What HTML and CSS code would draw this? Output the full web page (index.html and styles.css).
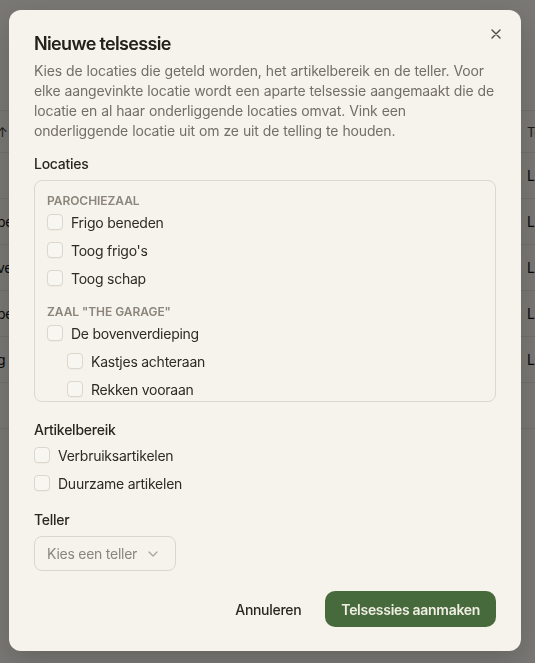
FILE: index.html
```html
<!DOCTYPE html>
<html lang="nl">
<head>
<meta charset="utf-8">
<title>Nieuwe telsessie</title>
<link rel="stylesheet" href="styles.css">
</head>
<body>
<div class="page">
  <div class="table">
    <div class="trow thead"><span class="c-left">↑</span><span class="c-right">Te</span></div>
    <div class="trow"><span class="c-left"></span><span class="c-right">L</span></div>
    <div class="trow"><span class="c-left">be</span><span class="c-right">L</span></div>
    <div class="trow"><span class="c-left">ve</span><span class="c-right">L</span></div>
    <div class="trow"><span class="c-left">be</span><span class="c-right">L</span></div>
    <div class="trow"><span class="c-left">g</span><span class="c-right">L</span></div>
    <div class="trow"><span class="c-left"></span><span class="c-right"></span></div>
  </div>
</div>

<div class="overlay">
  <div class="dialog" role="dialog" aria-labelledby="dlg-title">
    <button class="close" type="button" aria-label="Sluiten">
      <svg width="10" height="10" viewBox="0 0 10 10" aria-hidden="true"><path d="M1 1L9 9M9 1L1 9" stroke="currentColor" stroke-width="1.4" stroke-linecap="round" fill="none"/></svg>
    </button>
    <h2 class="title" id="dlg-title">Nieuwe telsessie</h2>
    <p class="desc">Kies de locaties die geteld worden, het artikelbereik en de teller. Voor<br>elke aangevinkte locatie wordt een aparte telsessie aangemaakt die de<br>locatie en al haar onderliggende locaties omvat. Vink een<br>onderliggende locatie uit om ze uit de telling te houden.</p>

    <section class="field field-loc">
      <div class="label">Locaties</div>
      <div class="loc-box">
        <div class="group">
          <div class="group-title">Parochiezaal</div>
          <ul class="items">
            <li><label class="check"><span class="cb"></span>Frigo beneden</label></li>
            <li><label class="check"><span class="cb"></span>Toog frigo's</label></li>
            <li><label class="check"><span class="cb"></span>Toog schap</label></li>
          </ul>
        </div>
        <div class="group">
          <div class="group-title">Zaal "The Garage"</div>
          <ul class="items">
            <li><label class="check"><span class="cb"></span>De bovenverdieping</label></li>
            <li class="child"><label class="check"><span class="cb"></span>Kastjes achteraan</label></li>
            <li class="child"><label class="check"><span class="cb"></span>Rekken vooraan</label></li>
          </ul>
        </div>
      </div>
    </section>

    <section class="field field-range">
      <div class="label">Artikelbereik</div>
      <ul class="items">
        <li><label class="check"><span class="cb"></span>Verbruiksartikelen</label></li>
        <li><label class="check"><span class="cb"></span>Duurzame artikelen</label></li>
      </ul>
    </section>

    <section class="field field-teller">
      <div class="label">Teller</div>
      <button class="select" type="button">
        <span class="select-text">Kies een teller</span>
        <svg class="chev" width="10" height="6" viewBox="0 0 10 6" aria-hidden="true"><path d="M1 1L5 5L9 1" stroke="currentColor" stroke-width="1.2" stroke-linecap="round" stroke-linejoin="round" fill="none"/></svg>
      </button>
    </section>

    <div class="actions">
      <button class="btn btn-ghost" type="button">Annuleren</button>
      <button class="btn btn-primary" type="button">Telsessies aanmaken</button>
    </div>
  </div>
</div>
</body>
</html>
```

FILE: styles.css
```css
* { box-sizing: border-box; }

html, body {
  margin: 0;
  padding: 0;
}

body {
  width: 535px;
  height: 663px;
  overflow: hidden;
  background: #f4f1ea;
  font-family: Inter, "Noto Sans", "Liberation Sans", sans-serif;
  color: #2a2621;
  letter-spacing: -0.25px;
}

/* background page */
.page {
  padding-top: 110px;
}

.table {
  border-top: 1px solid #e4dfd5;
}

.trow {
  display: flex;
  justify-content: space-between;
  align-items: center;
  height: 46px;
  border-bottom: 1px solid #e4dfd5;
  font-size: 14px;
  color: #111111;
}

.trow.thead {
  height: 42px;
  color: #3a3632;
  font-size: 13px;
}

.c-left {
  margin-left: -3px;
}

.c-right {
  width: 8px;
  overflow: hidden;
  white-space: nowrap;
}

/* overlay + dialog */
.overlay {
  position: fixed;
  inset: 0;
  background: rgba(0, 0, 0, 0.5);
  padding: 10px 0 0 9px;
}

.dialog {
  position: relative;
  width: 512px;
  background: #f6f3ec;
  border-radius: 12px;
  padding: 22px 25px 24px;
  box-shadow: 0 10px 30px rgba(0, 0, 0, 0.18);
}

.close {
  position: absolute;
  top: 14px;
  right: 15px;
  width: 20px;
  height: 20px;
  padding: 0;
  border: 0;
  background: transparent;
  color: #4d4943;
  display: flex;
  align-items: center;
  justify-content: center;
}

.title {
  margin: 0 0 4px;
  font-size: 18px;
  line-height: 24px;
  font-weight: 600;
  color: #24201c;
  letter-spacing: -0.65px;
}

.desc {
  margin: 0;
  padding-top: 1px;
  font-size: 14px;
  line-height: 20px;
  color: #736e66;
  letter-spacing: -0.15px;
  word-spacing: 0.3px;
  white-space: nowrap;
}

.field-loc { margin-top: 13px; }
.field-range { margin-top: 18px; }
.field-teller { margin-top: 17px; }

.label {
  font-size: 14px;
  line-height: 20px;
  font-weight: 500;
  color: #2a2621;
  margin-bottom: 6px;
}

.field-range .label { margin-bottom: 5px; }

.loc-box {
  height: 222px;
  overflow: hidden;
  border: 1px solid #ddd8ce;
  border-radius: 8px;
  padding: 12px 12px;
}

.group + .group { margin-top: 16px; }

.group-title {
  font-size: 12px;
  line-height: 16px;
  font-weight: 600;
  text-transform: uppercase;
  letter-spacing: -0.05px;
  color: #8b857b;
  margin-bottom: 3px;
}

.items {
  list-style: none;
  margin: 0;
  padding: 0;
  display: flex;
  flex-direction: column;
  gap: 8px;
}

.items .child { padding-left: 20px; }

.check {
  display: flex;
  align-items: center;
  gap: 8px;
  height: 20px;
  font-size: 14px;
  color: #2e2a25;
}

.cb {
  flex: none;
  width: 16px;
  height: 16px;
  border: 1px solid #dcd7cd;
  border-radius: 4px;
  background: #f8f6f1;
  box-shadow: 0 1px 1px rgba(0, 0, 0, 0.03);
}

.select {
  display: inline-flex;
  align-items: center;
  gap: 11px;
  height: 35px;
  padding: 0 17px 0 12px;
  border: 1px solid #dcd7cd;
  border-radius: 8px;
  background: #f6f3ec;
  font: inherit;
  font-size: 14px;
  letter-spacing: -0.25px;
  color: #8b867d;
}

.chev { color: #a8a298; }

.actions {
  display: flex;
  justify-content: flex-end;
  gap: 8px;
  margin-top: 20px;
}

.btn {
  height: 36px;
  padding: 0 16px;
  border: 0;
  border-radius: 10px;
  font: inherit;
  font-size: 14px;
  letter-spacing: -0.3px;
  font-weight: 600;
}

.btn-ghost {
  background: transparent;
  color: #2a2621;
  font-weight: 500;
}

.btn-primary {
  background: #466a3b;
  color: #f1eee4;
}
```
